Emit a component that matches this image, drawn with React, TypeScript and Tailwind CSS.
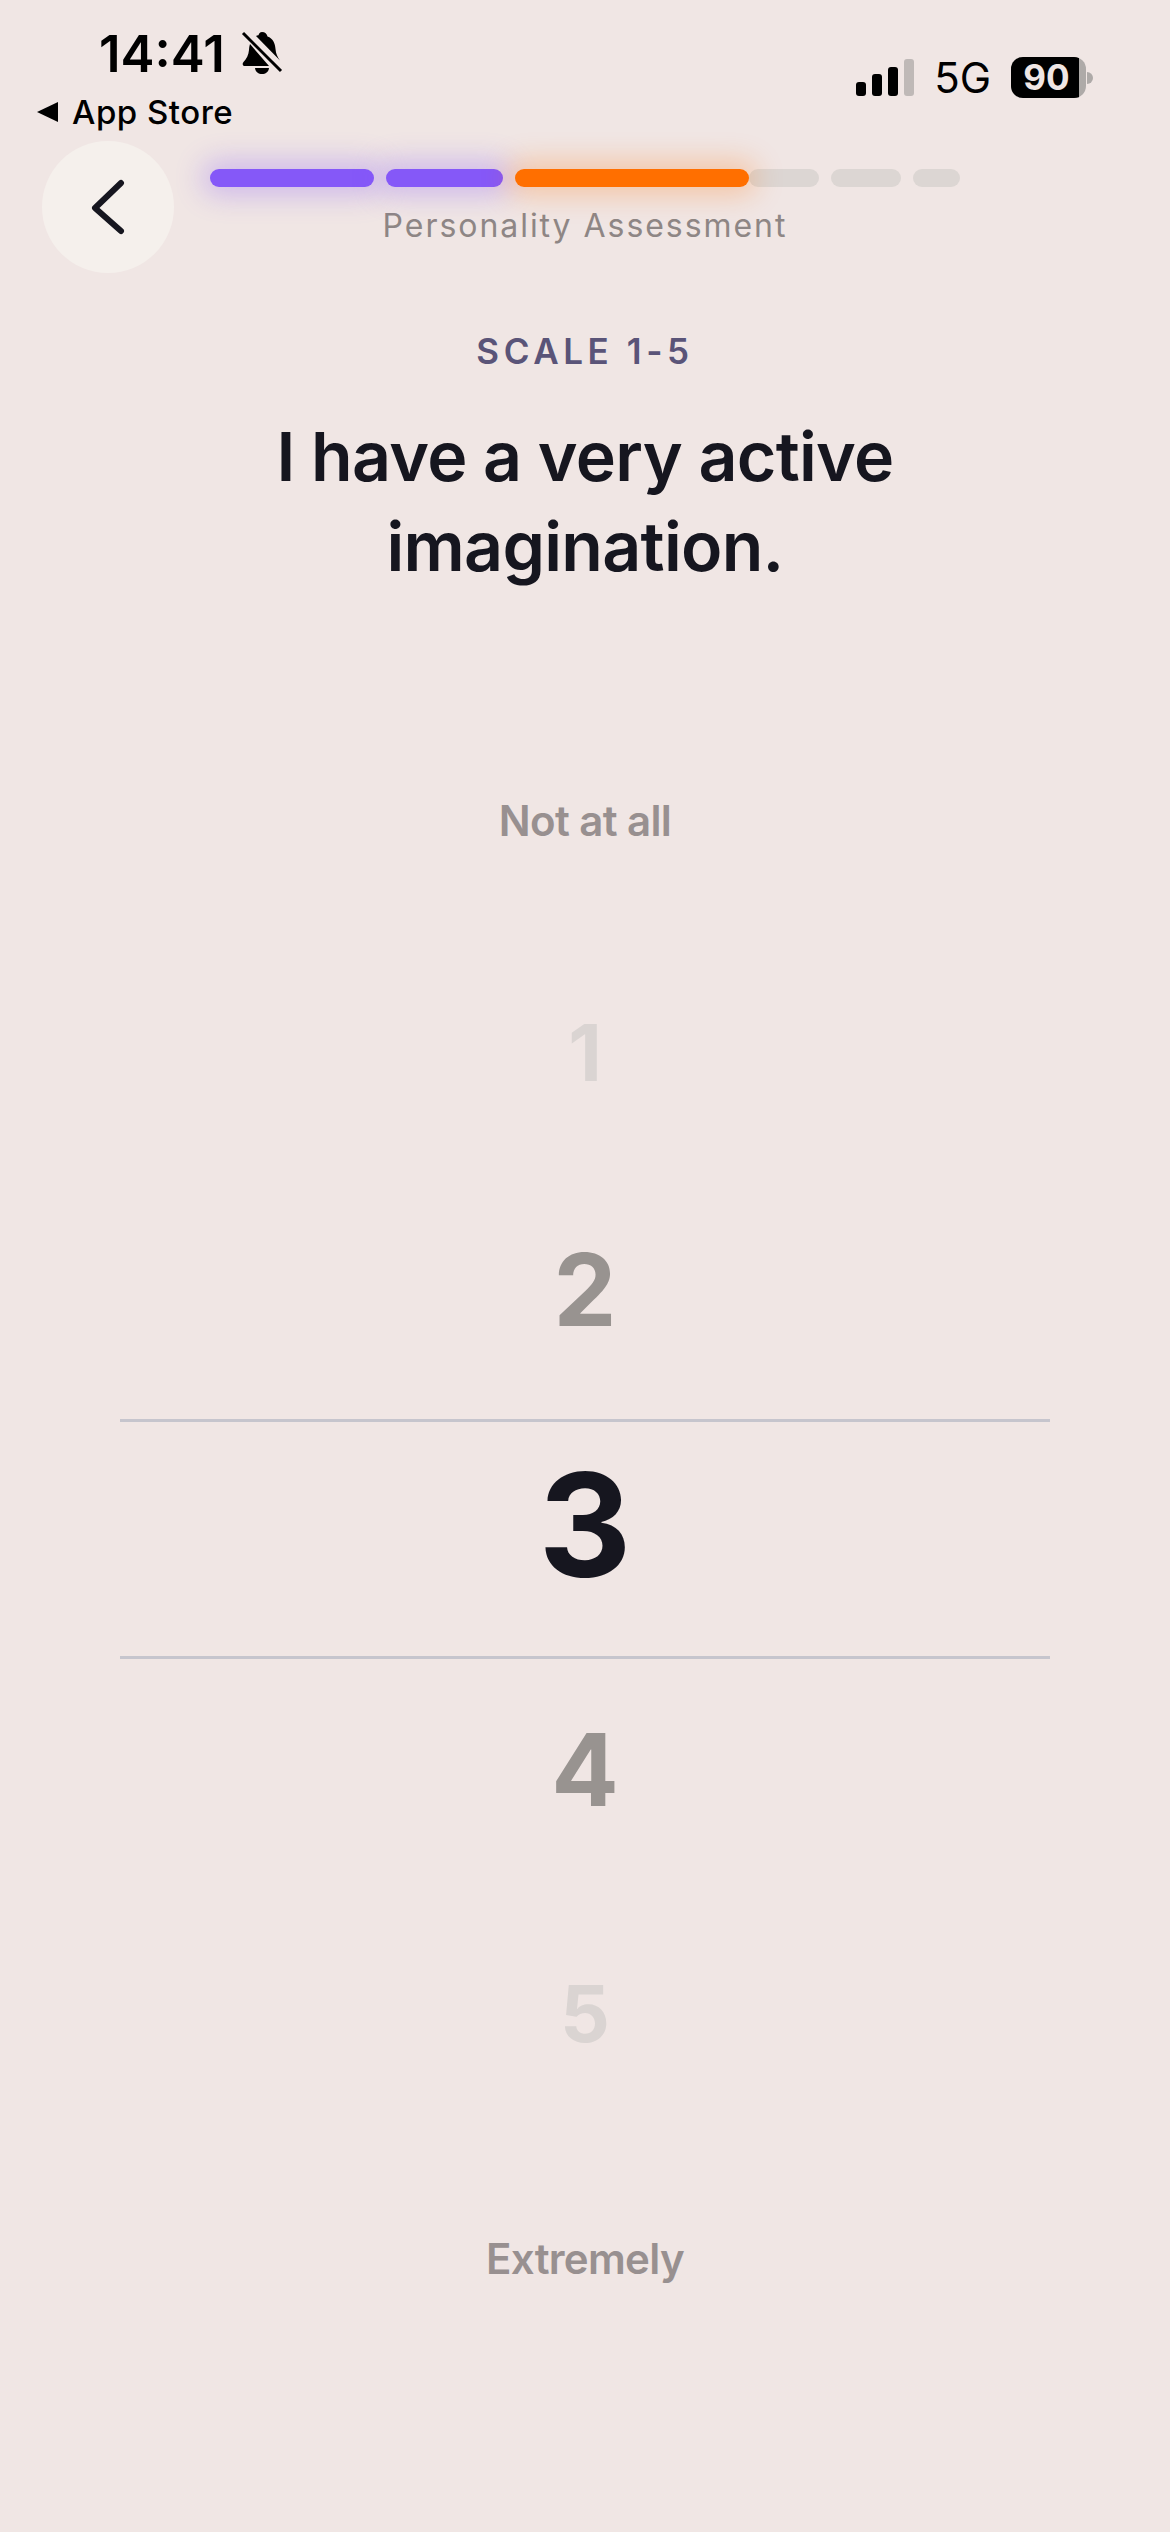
const segments = [
  { width: 'w-[164px]', color: 'bg-[#8558f8]', extra: 'shadow-[0_0_28px_8px_rgba(133,88,248,0.32)]' },
  { width: 'w-[117px]', color: 'bg-[#8558f8]', extra: 'shadow-[0_0_28px_8px_rgba(133,88,248,0.32)]' },
  { width: 'w-[234px]', color: 'bg-[#ff6f00]', extra: 'z-10 shadow-[0_0_28px_8px_rgba(255,111,0,0.28)]' },
  { width: 'w-[70px]', color: 'bg-[#dcd6d3]', extra: '-ml-[12px]' },
  { width: 'w-[70px]', color: 'bg-[#dcd6d3]', extra: '' },
  { width: 'w-[47px]', color: 'bg-[#dcd6d3]', extra: '' },
];

function BellOff() {
  return (
    <svg width="42" height="44" viewBox="0 0 42 44" className="ml-[16px]">
      <path d="M21 1c3 0 5 2 5.500 4.500C32 7.500 34 12 34.500 18c.4 5 2 8 4.500 11.500L15 5c1-.8 2-1 2.500-.8C18 2.300 19 1 21 1Z" fill="#000" />
      <path d="M9 13c-.6 2-.8 3.500-1 6-.4 5-2.500 9-5.500 12-1.500 1.500-1 4 1.500 4h24Z" fill="#000" />
      <path d="M14 37h14c-.5 4-3.500 6-7 6s-6.500-2-7-6Z" fill="#000" />
      <path d="M2 2l38 38" stroke="#000" strokeWidth="3" />
      <path d="M5 0l37 37" stroke="#f0e6e4" strokeWidth="2.500" />
    </svg>
  );
}

function Signal() {
  return (
    <div className="flex items-end gap-[6px] h-[37px]">
      <div className="w-[10px] h-[14px] rounded-[3px] bg-black" />
      <div className="w-[10px] h-[22px] rounded-[3px] bg-black" />
      <div className="w-[10px] h-[29px] rounded-[3px] bg-black" />
      <div className="w-[10px] h-[37px] rounded-[3px] bg-[#bfb9b7]" />
    </div>
  );
}

function Battery() {
  return (
    <div className="flex items-center">
      <div className="relative flex w-[75px] h-[41px] rounded-[12px] overflow-hidden bg-[#aeaaa8]">
        <div className="w-[68px] h-full bg-black" />
        <span className="absolute inset-0 flex items-center justify-center pr-[4px] text-[35px] font-bold text-[#f0e6e4] leading-none">90</span>
      </div>
      <div className="ml-[1px] w-[6px] h-[12px] rounded-r-full bg-[#aeaaa8]" />
    </div>
  );
}

export default function App() {
  return (
    <div className="relative w-[1170px] h-[2532px] overflow-hidden bg-[#f0e6e4] text-[#16161f] font-['Inter',sans-serif]">
      {/* status bar */}
      <div className="flex justify-between h-[142px]">
        <div className="pl-[37px] pt-[28px]">
          <div className="flex items-center pl-[62px] h-[50px]">
            <span className="text-[51px] font-semibold leading-none text-black">14:41</span>
            <BellOff />
          </div>
          <div className="flex items-center mt-[16px] h-[36px] text-black">
            <svg width="22" height="22" viewBox="0 0 22 22"><path d="M0 11 21 1v20Z" fill="#000" /></svg>
            <span className="ml-[13px] text-[33px] font-medium leading-none tracking-[0.5px]">App Store</span>
          </div>
        </div>
        <div className="flex items-center self-start gap-[20px] mt-[57px] mr-[77px] h-[41px]">
          <Signal />
          <span className="text-[42px] leading-none text-black">5G</span>
          <Battery />
        </div>
      </div>

      {/* progress header */}
      <div className="flex h-[131px]">
        <button className="flex items-center justify-center w-[132px] h-[132px] ml-[42px] -translate-y-[1px] rounded-full bg-[#f5f0ec]">
          <svg width="36" height="56" viewBox="0 0 36 56" fill="none" stroke="#16161f" strokeWidth="6" strokeLinecap="round" strokeLinejoin="round">
            <path d="M31 4 5 29l26 23" />
          </svg>
        </button>
        <div className="ml-[36px]">
          <div className="flex gap-[12px] mt-[27px]">
            {segments.map((s, i) => (
              <div key={i} className={`relative ${s.width} h-[18px] rounded-full ${s.color} ${s.extra}`} />
            ))}
          </div>
          <p className="w-[750px] mt-[19px] text-center text-[32px] leading-[40px] tracking-[1.95px] text-[#8e8685]">Personality Assessment</p>
        </div>
      </div>

      {/* question */}
      <div className="mt-[56px] text-center">
        <p className="text-[35px] font-semibold leading-[44px] tracking-[4.6px] text-[#5a5478]">SCALE 1-5</p>
        <h1 className="mt-[38px] text-[68px] font-semibold leading-[90px] tracking-[-0.7px]">
          I have a very active<br />imagination.
        </h1>
      </div>

      {/* scale wheel */}
      <div className="flex flex-col items-center mt-[200px]">
        <p className="h-[60px] text-[42px] font-semibold leading-[60px] tracking-[-0.6px] text-[#989090]">Not at all</p>
        <div className="flex items-center justify-center h-[120px] mt-[142px] text-[78px] font-bold leading-none text-[#dad4d2]">1</div>
        <div className="flex items-center justify-center h-[120px] mt-[117px] text-[100px] font-bold leading-none text-[#989390]">2</div>
        <div className="flex items-start justify-center w-[930px] h-[240px] mt-[69px] border-y-[3px] border-[#c6c5cd]">
          <span className="mt-[18px] text-[144px] font-bold leading-[170px]">3</span>
        </div>
        <div className="flex items-center justify-center h-[120px] mt-[51px] text-[100px] font-bold leading-none text-[#989390]">4</div>
        <div className="flex items-center justify-center h-[120px] mt-[124px] text-[78px] font-bold leading-none text-[#dad4d2]">5</div>
        <p className="h-[60px] mt-[155px] text-[42px] font-semibold leading-[60px] tracking-[-0.7px] text-[#989090]">Extremely</p>
      </div>
    </div>
  );
}
